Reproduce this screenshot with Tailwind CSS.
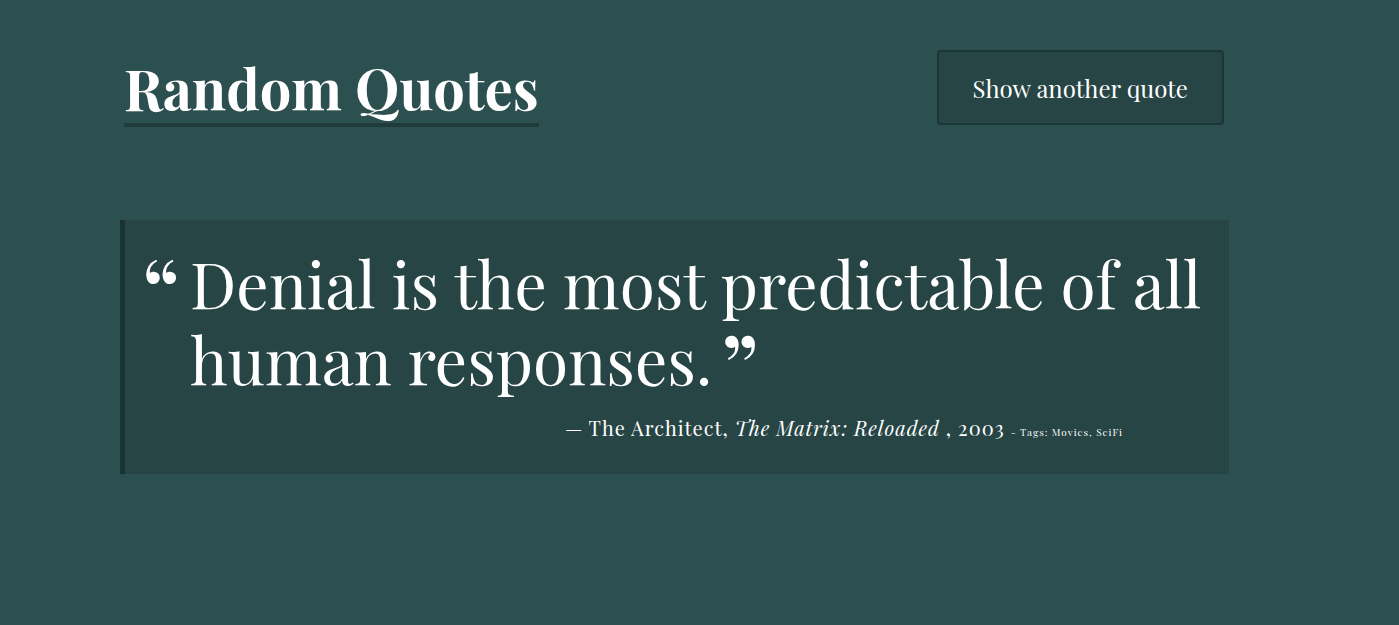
<!DOCTYPE html>
<html lang="en">
<head>
<meta charset="utf-8">
<meta name="viewport" content="width=device-width, initial-scale=1">
<title>Random Quotes</title>
<script src="https://cdn.jsdelivr.net/npm/@tailwindcss/browser@4"></script>
</head>
<body class="min-h-screen bg-[#2c4f4f] pt-[50px] pr-[170px] pl-[120px] font-['Playfair_Display','Liberation_Serif',serif] text-white">
<header class="flex items-start justify-between gap-6 pr-[5px] pl-1">
<h1 class="mt-2 border-b-4 border-[#1f3b3a] pb-[5px] text-[56px] leading-[60px] font-bold whitespace-nowrap">Random Quotes</h1>
<button type="button" class="h-[75px] rounded border-2 border-[#1b3636] bg-[#274545] px-[34px] text-[24px] whitespace-nowrap">Show another quote</button>
</header>
<main class="mt-[93px]">
<figure class="border-l-[5px] border-[#1b3232] bg-[#274545] pt-[25px] pr-5 pb-[23px] pl-4">
<blockquote class="flex text-[64px] leading-[76px]">
<span class="w-[49px] shrink-0 text-[96px] leading-[88px]">“</span>
<p>Denial is the most predictable of all human responses.<span class="ml-2 align-[-20px] text-[96px] leading-[40px]">”</span></p>
</blockquote>
<figcaption class="mt-3 pr-[86px] text-right text-[20px] leading-[38px] tracking-wider">— The Architect, <cite>The Matrix: Reloaded</cite> , 2003 <small class="text-[10px]">- Tags: Movies, SciFi</small></figcaption>
</figure>
</main>
</body>
</html>
